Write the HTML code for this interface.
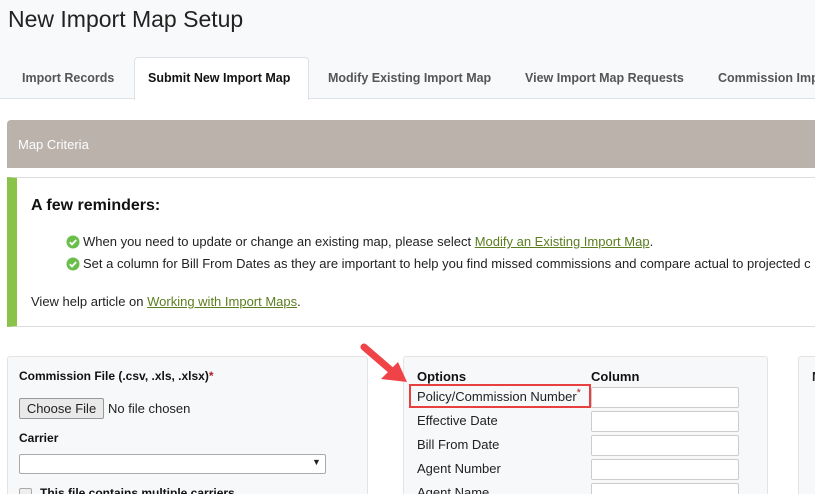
<!DOCTYPE html>
<html><head><style>
*{box-sizing:border-box;margin:0;padding:0}
html,body{width:815px;height:494px;overflow:hidden}
body{background:#fff;font-family:"Liberation Sans",sans-serif;color:#222;position:relative}
.a{position:absolute;white-space:nowrap}
.hd{position:absolute;left:0;top:0;width:815px;height:99px;background:#f8f9fa;border-bottom:1px solid #dee2e6}
.tab{position:absolute;top:71px;font-size:12.5px;font-weight:bold;color:#555;white-space:nowrap}
.inp{position:absolute;left:591px;width:148px;height:21px;background:#fff;border:1px solid #ccc;border-radius:2px}
.opt{position:absolute;left:417px;font-size:13px;color:#222;white-space:nowrap}
</style></head><body>
<div class="hd"></div>
<div class="a" style="left:8px;top:6px;font-size:23px;color:#222">New Import Map Setup</div>
<div class="a" style="left:134px;top:57px;width:175px;height:43px;background:#fff;border:1px solid #dee2e6;border-bottom:none;border-radius:4px 4px 0 0"></div>
<div class="tab" style="left:22px">Import Records</div>
<div class="tab" style="left:148px;color:#111">Submit New Import Map</div>
<div class="tab" style="left:328px">Modify Existing Import Map</div>
<div class="tab" style="left:525px">View Import Map Requests</div>
<div class="tab" style="left:718px">Commission Imp</div>
<div class="a" style="left:7px;top:120px;width:808px;height:48px;background:#bab2ab;border-radius:4px 0 0 0"></div>
<div class="a" style="left:18px;top:137px;font-size:13px;color:#fff">Map Criteria</div>
<div class="a" style="left:7px;top:177px;width:810px;height:150px;border:1px solid #ddd;border-left:10px solid #8bc34a"></div>
<div class="a" style="left:31px;top:197px;font-size:16px;font-weight:bold;color:#111">A few reminders:</div>
<svg class="a" style="left:66px;top:235px" width="14" height="14"><circle cx="7" cy="7" r="6.5" fill="#6abf4b"/><path d="M3.8 7.2l2.2 2.2 4.2-4.4" stroke="#fff" stroke-width="1.8" fill="none"/></svg>
<svg class="a" style="left:66px;top:257px" width="14" height="14"><circle cx="7" cy="7" r="6.5" fill="#6abf4b"/><path d="M3.8 7.2l2.2 2.2 4.2-4.4" stroke="#fff" stroke-width="1.8" fill="none"/></svg>
<div class="a" style="left:83px;top:234px;font-size:13px">When you need to update or change an existing map, please select <u style="color:#5b7d1e">Modify an Existing Import Map</u>.</div>
<div class="a" style="left:83px;top:256px;font-size:13px">Set a column for Bill From Dates as they are important to help you find missed commissions and compare actual to projected c</div>
<div class="a" style="left:31px;top:294px;font-size:13px">View help article on <u style="color:#5b7d1e">Working with Import Maps</u>.</div>
<div class="a" style="left:7px;top:356px;width:361px;height:200px;background:#f7f8fa;border:1px solid #e3e3e3;border-radius:3px"></div>
<div class="a" style="left:403px;top:356px;width:365px;height:200px;background:#f7f8fa;border:1px solid #e3e3e3;border-radius:3px"></div>
<div class="a" style="left:798px;top:356px;width:30px;height:200px;background:#f7f8fa;border:1px solid #e3e3e3;border-radius:3px"></div>
<div class="a" style="left:812px;top:369px;font-size:13px;font-weight:bold">N</div>
<div class="a" style="left:19px;top:369px;font-size:12px;font-weight:bold;color:#111">Commission File (.csv, .xls, .xlsx)<span style="color:#a3262a">*</span></div>
<div class="a" style="left:19px;top:398px;width:85px;height:21px;background:#e9e9e9;border:1px solid #999;border-radius:2px;font-size:13px;text-align:center;line-height:19px">Choose File</div>
<div class="a" style="left:108px;top:401px;font-size:13px">No file chosen</div>
<div class="a" style="left:19px;top:431px;font-size:12px;font-weight:bold;color:#111">Carrier</div>
<div class="a" style="left:19px;top:454px;width:307px;height:20px;background:#fff;border:1px solid #aaa;border-radius:2px"></div>
<div class="a" style="left:312px;top:457px;font-size:9px">▼</div>
<div class="a" style="left:19px;top:488px;width:13px;height:13px;background:#eee;border:1px solid #aaa;border-radius:2px"></div>
<div class="a" style="left:40px;top:486px;font-size:12px;font-weight:bold;color:#111">This file contains multiple carriers</div>
<div class="a" style="left:417px;top:369px;font-size:13px;font-weight:bold;color:#111">Options</div>
<div class="a" style="left:591px;top:369px;font-size:13px;font-weight:bold;color:#111">Column</div>
<div class="opt" style="top:389px">Policy/Commission Number<span style="color:#a3262a;font-size:11px;position:relative;top:-5px">*</span></div>
<div class="opt" style="top:413px">Effective Date</div>
<div class="opt" style="top:437px">Bill From Date</div>
<div class="opt" style="top:461px">Agent Number</div>
<div class="opt" style="top:485px">Agent Name</div>
<div class="inp" style="top:387px"></div>
<div class="inp" style="top:411px"></div>
<div class="inp" style="top:435px"></div>
<div class="inp" style="top:459px"></div>
<div class="inp" style="top:483px"></div>
<div class="a" style="left:409px;top:384px;width:182px;height:24px;border:2.5px solid #e8403f"></div>
<svg class="a" style="left:355px;top:338px" width="60" height="50"><path d="M9 9 L38 34" stroke="#f04348" stroke-width="7" stroke-linecap="round"/><path d="M52 44 L26 41 L43 24 Z" fill="#f04348"/></svg>
</body></html>
